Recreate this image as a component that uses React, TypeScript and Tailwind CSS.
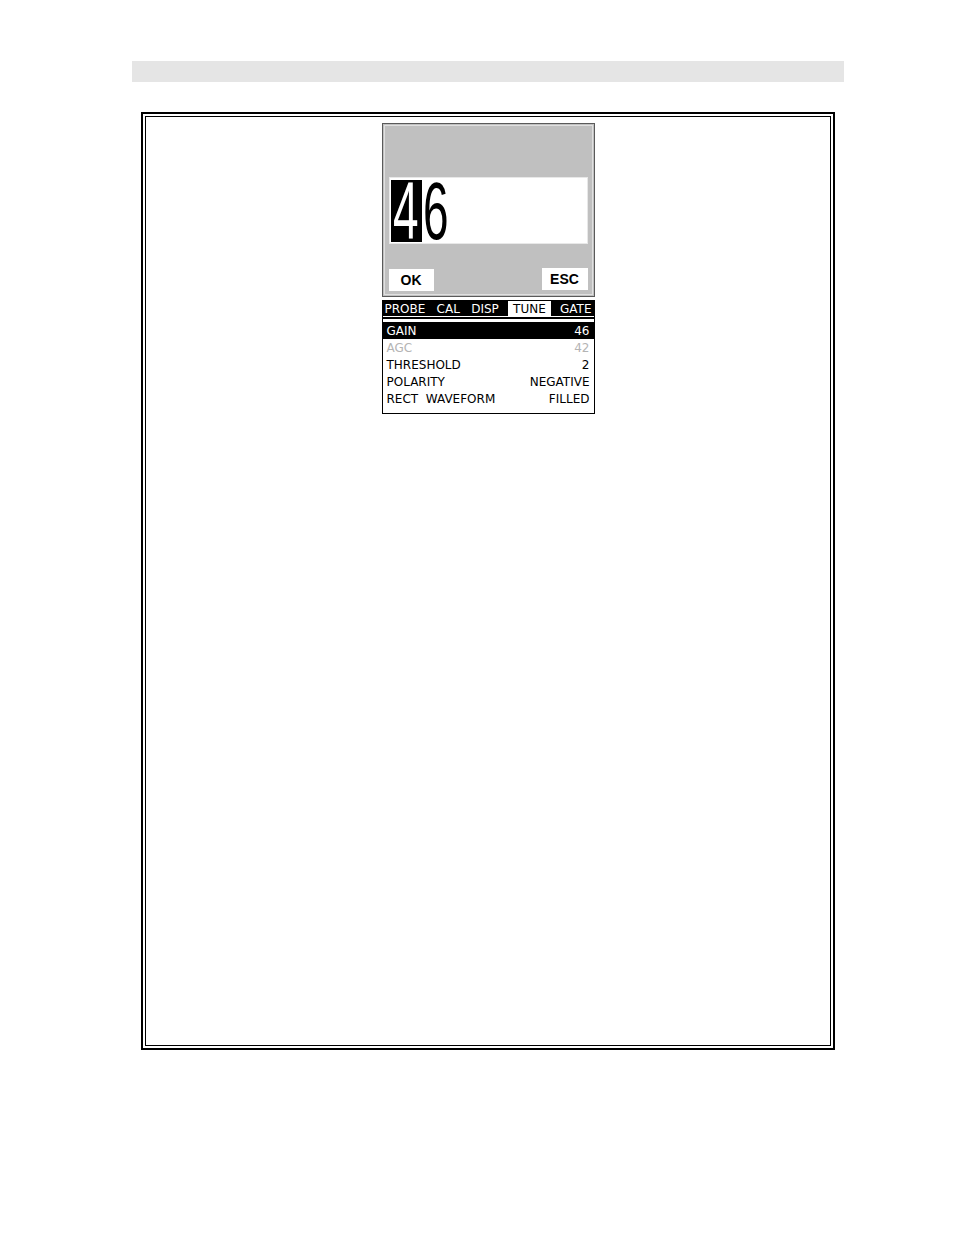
import React from "react";

type Row = { label: string; value: string; state?: "active" | "disabled" };

const tabs = ["PROBE", "CAL", "DISP", "TUNE", "GATE"];
const rows: Row[] = [
  { label: "GAIN", value: "46", state: "active" },
  { label: "AGC", value: "42", state: "disabled" },
  { label: "THRESHOLD", value: "2" },
  { label: "POLARITY", value: "NEGATIVE" },
  { label: "RECT  WAVEFORM", value: "FILLED" },
];

const lcd = { fontFamily: '"DejaVu Sans", "Liberation Sans", sans-serif' };
const arial = { fontFamily: '"Liberation Sans", Arial, sans-serif' };

function EditScreen() {
  return (
    <div className="w-[213px] h-[174px] border border-[#5a5a5a] bg-[#c0c0c0] p-[1px]">
      <div className="w-full h-full border border-[#e0e0e0] flex flex-col px-[4px]">
        <div className="mt-[51px] h-[67px] bg-white border border-[#e8e8e8] flex items-center pl-[1px]">
          <div className="flex h-[62px] items-center leading-none" style={arial}>
            <span className="bg-black text-white w-[31px] h-[62px] flex items-center justify-center">
              <span className="inline-block text-[82px] scale-x-[0.56]">4</span>
            </span>
            <span className="w-[28px] h-[62px] flex items-center justify-center text-black">
              <span className="inline-block text-[82px] scale-x-[0.56]">6</span>
            </span>
          </div>
        </div>
        <div className="mt-auto mb-[3px] flex justify-between items-end">
          <div
            className="w-[45px] h-[22px] bg-white flex items-center justify-center text-[14px] font-bold text-black"
            style={arial}
          >
            OK
          </div>
          <div
            className="w-[46px] h-[22px] bg-white flex items-center justify-center text-[14px] font-bold text-black mb-[1px]"
            style={arial}
          >
            ESC
          </div>
        </div>
      </div>
    </div>
  );
}

function Menu() {
  return (
    <div className="w-[213px] border border-black bg-white mt-[3px] pb-[6px]" style={lcd}>
      <div className="bg-black h-[15px] flex items-center justify-between text-[12px] text-white leading-none">
        {tabs.map((t) => (
          <span
            key={t}
            className={
              t === "TUNE"
                ? "bg-white text-black h-full flex items-center px-[5px]"
                : "h-full flex items-center px-[2px]"
            }
          >
            {t}
          </span>
        ))}
      </div>
      <div className="h-[2px] bg-black mt-[1px]" />
      <div className="flex flex-col mt-[3px]">
        {rows.map((r) => (
          <div
            key={r.label}
            className={
              "h-[17px] flex items-center justify-between px-[4px] text-[12px] leading-none whitespace-pre " +
              (r.state === "active"
                ? "bg-black text-white"
                : r.state === "disabled"
                ? "text-[#b4b4b4]"
                : "text-black")
            }
          >
            <span>{r.label}</span>
            <span>{r.value}</span>
          </div>
        ))}
      </div>
    </div>
  );
}

export default function App() {
  return (
    <div className="w-[954px] h-[1235px] bg-white relative overflow-hidden">
      <div className="ml-[132px] mt-[61px] w-[712px] h-[21px] bg-[#e5e5e5]" />
      <div className="ml-[141px] mt-[30px] w-[694px] h-[938px] border-2 border-black p-[2px]">
        <div className="w-full h-full border border-black flex flex-col items-center pt-[6px]">
          <EditScreen />
          <Menu />
        </div>
      </div>
    </div>
  );
}
